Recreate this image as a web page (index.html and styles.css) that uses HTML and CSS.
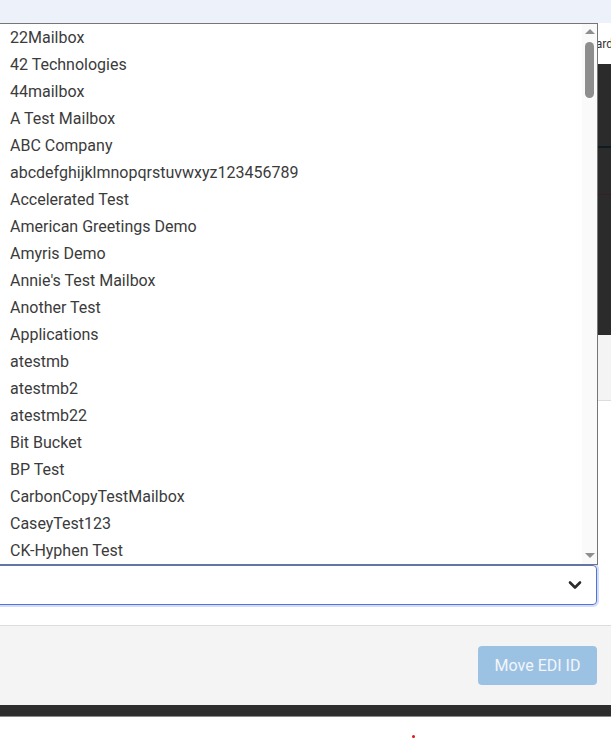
FILE: index.html
```html
<!DOCTYPE html>
<html lang="en">
<head>
    <meta charset="UTF-8">
    <meta name="viewport" content="width=device-width, initial-scale=1.0">
    <title>Move EDI ID</title>
    <link rel="stylesheet" href="styles.css">
</head>
<body>

    <div class="page">
        <!-- Top band -->
        <div class="topbar"></div>

        <!-- Nav row behind the modal -->
        <div class="nav">
            <span class="nav-link">Dashboard</span>
        </div>

        <!-- Dark panel -->
        <div class="stage">
            <div class="rule rule-blue"></div>
            <div class="rule rule-red"></div>
        </div>
        <div class="strip"></div>

        <!-- Mailbox select -->
        <div class="form">
            <div class="select">
                <svg class="chevron" width="14" height="10" viewBox="0 0 14 10">
                    <path d="M2 2.5 L7 7.5 L12 2.5" fill="none" stroke="#2b2b2b" stroke-width="2.6" stroke-linecap="round" stroke-linejoin="round"/>
                </svg>
            </div>
        </div>

        <!-- Footer with action -->
        <div class="footer">
            <button class="move-btn" disabled>Move EDI ID</button>
        </div>
        <div class="darkbar"></div>
        <div class="bottom">
            <span class="dot"></span>
        </div>

        <!-- Open dropdown list -->
        <div class="listbox">
            <div class="options">
                <div class="option">22Mailbox</div>
                <div class="option">42 Technologies</div>
                <div class="option">44mailbox</div>
                <div class="option">A Test Mailbox</div>
                <div class="option">ABC Company</div>
                <div class="option">abcdefghijklmnopqrstuvwxyz123456789</div>
                <div class="option">Accelerated Test</div>
                <div class="option">American Greetings Demo</div>
                <div class="option">Amyris Demo</div>
                <div class="option">Annie's Test Mailbox</div>
                <div class="option">Another Test</div>
                <div class="option">Applications</div>
                <div class="option">atestmb</div>
                <div class="option">atestmb2</div>
                <div class="option">atestmb22</div>
                <div class="option">Bit Bucket</div>
                <div class="option">BP Test</div>
                <div class="option">CarbonCopyTestMailbox</div>
                <div class="option">CaseyTest123</div>
                <div class="option">CK-Hyphen Test</div>
            </div>
            <div class="scrollbar">
                <span class="arrow-up"></span>
                <span class="thumb"></span>
                <span class="arrow-down"></span>
            </div>
        </div>
    </div>

</body>
</html>
```

FILE: styles.css
```css
body {
    margin: 0;
    font-family: Roboto, 'Liberation Sans', sans-serif;
    background-color: #ffffff;
    overflow: hidden;
}
.page {
    position: relative;
    width: 611px;
    height: 739px;
    overflow: hidden;
}
.topbar {
    height: 23px;
    background-color: #edf1f9;
}
.nav {
    height: 41px;
    padding-left: 555px;
    display: flex;
    align-items: center;
    white-space: nowrap;
    overflow: hidden;
}
.nav-link {
    font-size: 12px;
    color: #333;
}
.stage {
    height: 271px;
    background-color: #2b2b2b;
    padding-top: 82px;
    box-sizing: border-box;
}
.rule {
    height: 2px;
}
.rule-blue {
    background-color: #0e1c24;
}
.rule-red {
    margin-top: 46px;
    height: 1px;
    background-color: #3a1c24;
}
.strip {
    height: 65px;
    background-color: #f4f4f4;
    border-bottom: 1px solid #dddddd;
}

/* Select */
.form {
    padding: 164px 14px 20px 0;
}
.select {
    height: 40px;
    margin-left: -4px;
    box-sizing: border-box;
    border: 1px solid #5374d4;
    border-radius: 4px;
    box-shadow: 0 0 0 2px #d3ddf5;
    display: flex;
    align-items: center;
    justify-content: flex-end;
    padding-right: 14px;
}
.chevron {
    display: block;
}

/* Footer */
.footer {
    border-top: 1px solid #dddddd;
    background-color: #f4f4f4;
    padding: 20px 14px;
    display: flex;
    justify-content: flex-end;
}
.move-btn {
    height: 39px;
    width: 119px;
    border: none;
    border-radius: 4px;
    background-color: #9cc2e3;
    color: #f2f6fb;
    font-family: Roboto, 'Liberation Sans', sans-serif;
    font-size: 16px;
}
.darkbar {
    height: 11px;
    background-color: #2d2d2d;
    border-bottom: 1px solid #8a8a8a;
}
.bottom {
    height: 22px;
    padding-left: 412px;
    padding-top: 18px;
    box-sizing: border-box;
}
.dot {
    display: block;
    width: 3px;
    height: 3px;
    border-radius: 50%;
    background-color: #e01515;
}

/* Dropdown list */
.listbox {
    position: absolute;
    top: 23px;
    left: -1px;
    width: 599px;
    height: 542px;
    box-sizing: border-box;
    border: 1px solid #767676;
    background-color: #ffffff;
    display: flex;
}
.options {
    flex: 1;
    overflow: hidden;
    padding-left: 10px;
}
.option {
    height: 27px;
    line-height: 27px;
    font-size: 16px;
    color: #3b3b3b;
    white-space: nowrap;
}
.scrollbar {
    width: 15px;
    background-color: #fafafa;
    display: flex;
    flex-direction: column;
    align-items: center;
    padding: 5px 0 6px;
    box-sizing: border-box;
}
.arrow-up {
    width: 0;
    height: 0;
    border-left: 5px solid transparent;
    border-right: 5px solid transparent;
    border-bottom: 5px solid #8e8e8e;
}
.thumb {
    width: 9px;
    height: 56px;
    margin-top: 8px;
    border-radius: 5px;
    background-color: #8e8e8e;
}
.arrow-down {
    margin-top: auto;
    width: 0;
    height: 0;
    border-left: 5px solid transparent;
    border-right: 5px solid transparent;
    border-top: 5px solid #8e8e8e;
}
```
